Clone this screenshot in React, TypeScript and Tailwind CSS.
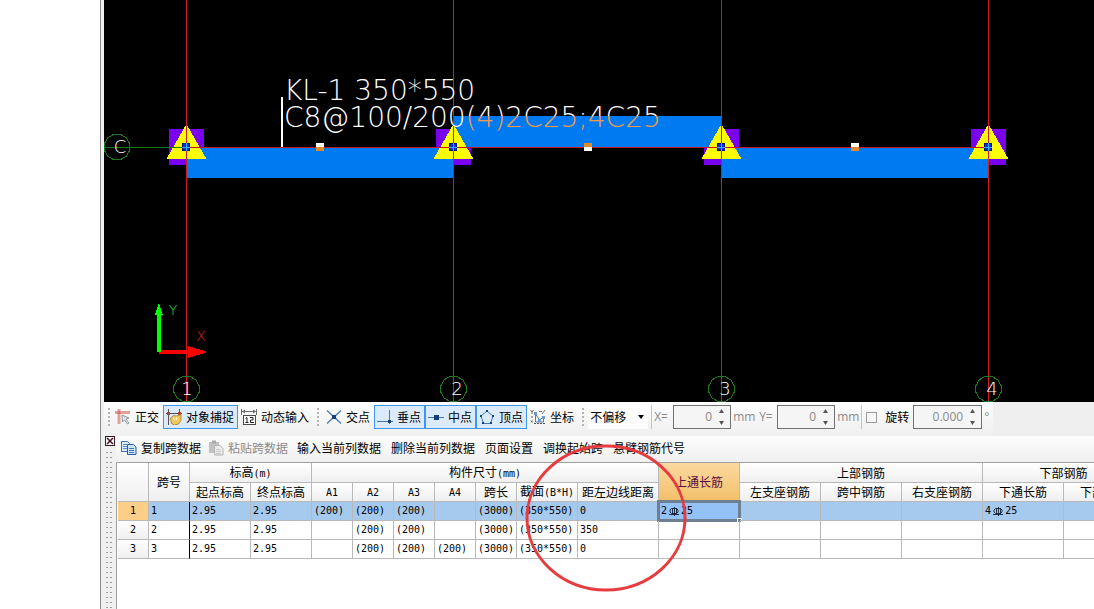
import React, { useState } from 'react';

type IconProps = { className?: string };

const CAD_FONT = "font-['DejaVu_Sans_Light','DejaVu_Sans',sans-serif] font-extralight";

// ---------- toolbar icons ----------

const OrthoIcon: React.FC<IconProps> = () => (
  <svg width="16" height="16" viewBox="0 0 16 16" className="shrink-0">
    <path d="M0 3.500h15M4 0v15" stroke="#e3a19a" strokeWidth="3" fill="none" />
    <path d="M2.500 2h3v3h-3z" fill="#d9776f" />
    <path d="M7 6l7 3-3 1 3 4-1.500 1-3-4-2 2z" fill="#dfe4ea" stroke="#7b8794" strokeWidth="0.8" />
  </svg>
);

const SnapIcon: React.FC<IconProps> = () => (
  <svg width="16" height="16" viewBox="0 0 16 16" className="shrink-0">
    <path d="M0 4.500h16M2.500 0v16M13.500 0v6" stroke="#55504e" strokeWidth="1" fill="none" />
    <path d="M1 3h3v3H1zM12 3h3v3h-3z" fill="#b0443c" />
    <path d="M4.500 9l3-2.500 3 0.500 4.500-1.500v6l-2.500 3.500-4 1-3-1.500z" fill="#f0c860" stroke="#a57b22" strokeWidth="0.8" />
    <path d="M7 9l2 2M10 8l1 3" stroke="#fff0b8" strokeWidth="1.200" />
  </svg>
);

const DynamicInputIcon: React.FC<IconProps> = () => (
  <svg width="16" height="16" viewBox="0 0 16 16" className="shrink-0">
    <path d="M0.500 0v6M15.500 0v6M1 2.500h14" stroke="#6d6d6d" fill="none" />
    <path d="M1 2.500l3-2v4zM15 2.500l-3-2v4z" fill="#6d6d6d" />
    <rect x="2.500" y="6.500" width="12" height="9" fill="#fff" stroke="#4a4a4a" />
    <path d="M4.500 9.500l1.500-1v5.500M4.500 13.500h3M9 8.500h3v2.500H9.500v2.500H13" stroke="#222" fill="none" />
  </svg>
);

const CrossIcon: React.FC<IconProps> = () => (
  <svg width="16" height="16" viewBox="0 0 16 16" className="shrink-0">
    <path d="M1 1.500l14 13M15 1.500l-14 13" stroke="#3f78b5" strokeWidth="1.200" fill="none" />
    <rect x="6" y="6" width="4" height="4" fill="#16407c" />
  </svg>
);

const PerpIcon: React.FC<IconProps> = () => (
  <svg width="16" height="16" viewBox="0 0 16 16" className="shrink-0">
    <path d="M0 12.500h16M12.500 1v14" stroke="#3f78b5" fill="none" />
    <rect x="11" y="11" width="3" height="3" fill="#16407c" />
  </svg>
);

const MidIcon: React.FC<IconProps> = () => (
  <svg width="16" height="16" viewBox="0 0 16 16" className="shrink-0">
    <path d="M0 8.500h16" stroke="#3f78b5" fill="none" />
    <rect x="6" y="6" width="5" height="5" fill="#16407c" />
  </svg>
);

const VertexIcon: React.FC<IconProps> = () => (
  <svg width="16" height="16" viewBox="0 0 16 16" className="shrink-0">
    <path d="M8 2l6 5-2.500 7.500h-7L2 7z" stroke="#3f78b5" fill="none" />
    <path d="M7 1h2v2H7zM13 6h2v2h-2zM11 13h2v2h-2zM3 13h2v2H3zM1 6h2v2H1z" fill="#16407c" />
  </svg>
);

const CoordIcon: React.FC<IconProps> = () => (
  <svg width="16" height="16" viewBox="0 0 16 16" className="shrink-0">
    <path d="M0.500 1l1.500 2L3.500 1M2 3v2" stroke="#444" fill="none" strokeWidth="0.8" />
    <path d="M1 11.500l1.500 2M2.500 11.500l-1.500 2" stroke="#444" fill="none" strokeWidth="0.8" />
    <path d="M2 7v3M4 14.500h12" stroke="#555" fill="none" strokeDasharray="2 1" />
    <path d="M5.500 4v9h8V8l-4 3-4-6" stroke="#4b7fb5" fill="none" />
    <path d="M4 3h3v3H4zM12 7h3v3h-3zM8 10h3v3H8z" fill="#6d9bcb" />
    <path d="M9 2.500h3M12 5l3-4" stroke="#777" />
  </svg>
);

const CopyIcon: React.FC<IconProps> = () => (
  <svg width="16" height="16" viewBox="0 0 16 16" className="shrink-0">
    <path d="M0.500 1.500h6l2 2v8h-8z" fill="#dcecff" stroke="#3d6fb6" />
    <path d="M2 4.500h4M2 6.500h4M2 8.500h4" stroke="#5b8cd0" />
    <path d="M6.500 4.500h6l2.500 2.500v7.500H6.500z" fill="#cfe3fb" stroke="#2b5aa3" />
    <path d="M8 8.500h5M8 10.500h5M8 12.500h5" stroke="#3f76c2" />
  </svg>
);

const PasteIcon: React.FC<IconProps> = () => (
  <svg width="16" height="16" viewBox="0 0 16 16" className="shrink-0">
    <path d="M1 2h10v11H1z" fill="#c2c2c2" />
    <path d="M4 0.500h4v3H4z" fill="#a9a9a9" />
    <path d="M6.500 5.500h5.500l3 3v6.500H6.500z" fill="#ececec" stroke="#b4b4b4" />
    <path d="M8 9.500h4M8 11.500h5M8 13.500h5" stroke="#c8c8c8" />
  </svg>
);

const RebarIcon: React.FC<IconProps> = () => (
  <svg width="12" height="9" viewBox="0 0 12 9" className="shrink-0" aria-hidden="true">
    <path d="M3.500 1.500h5l1.500 1.500v2l-1.500 1.500h-5L2 5V3zM4.500 1v6M6.500 0v9M8.500 1v6M1 7.500h10" stroke="#14203a" strokeWidth="0.9" fill="none" />
  </svg>
);

// ---------- toolbar parts ----------

const Grip = () => (
  <span className="mx-[3px] h-5 w-1 bg-[radial-gradient(circle,#b4b4b4_1px,transparent_1px)] bg-[size:4px_4px]" />
);

interface ToolButtonProps {
  label: string;
  icon?: React.ReactNode;
  active?: boolean;
  disabled?: boolean;
  onClick?: () => void;
}

const ToolButton: React.FC<ToolButtonProps> = ({ label, icon, active, disabled, onClick }) => (
  <button
    type="button"
    disabled={disabled}
    aria-pressed={active}
    onClick={onClick}
    className={`flex h-6 shrink-0 items-center gap-1 whitespace-nowrap border ${icon ? 'pl-0.5 pr-[3px]' : 'px-1'} ${
      active ? 'border-[#3c97f0] bg-[#dcebfb]' : 'border-transparent'
    } ${disabled ? 'text-[#8c8c8c]' : 'text-black'}`}
  >
    {icon}
    {label}
  </button>
);

interface SpinBoxProps {
  id: string;
  value: string;
  wide?: boolean;
}

const SpinBox: React.FC<SpinBoxProps> = ({ id, value, wide }) => {
  const [text, setText] = useState(value);
  const step = (delta: number) => {
    const digits = value.includes('.') ? 3 : 0;
    setText((Number(text) + delta).toFixed(digits));
  };
  return (
    <span className={`flex h-6 shrink-0 border border-[#707070] bg-[#f5f5f5] ${wide ? 'w-[69px]' : 'w-[58px]'}`}>
      <input
        id={id}
        value={text}
        onChange={(e) => setText(e.target.value)}
        className="w-0 flex-1 bg-transparent text-right text-[#8a8a8a] outline-none"
      />
      <span className="flex w-[18px] flex-col items-center justify-between py-[3px]">
        <button type="button" aria-label="+" onClick={() => step(1)}>
          <svg width="5" height="4" viewBox="0 0 5 4" className="block"><path d="M0 4L2.500 0 5 4z" fill="#555" /></svg>
        </button>
        <button type="button" aria-label="-" onClick={() => step(-1)}>
          <svg width="5" height="4" viewBox="0 0 5 4" className="block"><path d="M0 0L2.500 4 5 0z" fill="#555" /></svg>
        </button>
      </span>
    </span>
  );
};

// ---------- drawing area ----------

const axes = [
  { x: 82, label: '1', labelX: 83 },
  { x: 349, label: '2', labelX: 353 },
  { x: 617, label: '3', labelX: 621 },
  { x: 884, label: '4', labelX: 888 },
];

const spans = [
  { x: 83, y: 148, width: 267, height: 30 },
  { x: 350, y: 116, width: 267, height: 31 },
  { x: 618, y: 148, width: 266, height: 30 },
];

const grips = [
  { x: 212, top: '#ffffff', bottom: '#e08a2c' },
  { x: 480, top: '#e08a2c', bottom: '#ffffff' },
  { x: 747, top: '#ffffff', bottom: '#e08a2c' },
];

const bubble = (cx: number, cy: number) =>
  Array.from({ length: 12 }, (_, i) => {
    const a = (Math.PI / 6) * i + Math.PI / 12;
    return `${(cx + 13 * Math.cos(a)).toFixed(1)},${(cy + 13 * Math.sin(a)).toFixed(1)}`;
  }).join(' ');

const DrawingArea = () => (
  <svg className="block h-[402px] w-full bg-black" shapeRendering="crispEdges">
    <defs>
      <linearGradient id="overBeam" gradientUnits="userSpaceOnUse" x1="0" y1="100" x2="0" y2="132">
        <stop offset="0.5" stopColor="#ffffff" />
        <stop offset="0.5" stopColor="#f09a4a" />
      </linearGradient>
    </defs>

    {axes.map((a) => (
      <rect key={a.label} x={a.x - 17} y="129" width="35" height="36" fill="#7a00f0" />
    ))}
    {spans.map((s) => (
      <rect key={s.x} x={s.x} y={s.y} width={s.width} height={s.height} fill="#007af0" />
    ))}
    {axes.map((a) => (
      <path key={a.label} d={`M${a.x + 0.5} 124l20 35h-40z`} fill="#ffff00" />
    ))}

    {/* axis lines */}
    <rect x="0" y="147" width="82" height="1" fill="#147a14" />
    <rect x="82" y="147" width="802" height="1" fill="#c81418" />
    {axes.map((a) => (
      <rect key={a.label} x={a.x} y="0" width="1" height="402" fill="#d01c1c" />
    ))}
    {axes.map((a) => (
      <g key={a.label}>
        <rect x={a.x - 4} y="143" width="8" height="8" fill="#06106e" />
        <rect x={a.x - 3} y="144" width="6" height="6" fill="#0a2ce0" />
        <rect x={a.x - 4} y="147" width="8" height="1" fill="#38b4ff" />
        <rect x={a.x} y="143" width="1" height="8" fill="#38b4ff" />
      </g>
    ))}
    {grips.map((g) => (
      <g key={g.x}>
        <rect x={g.x} y="143" width="8" height="4" fill={g.top} />
        <rect x={g.x} y="147" width="8" height="4" fill={g.bottom} />
      </g>
    ))}

    {/* beam annotation */}
    <rect x="177" y="97" width="2" height="50" fill="#ffffff" />
    <g className={`${CAD_FONT} text-[28px]`} fill="#ffffff" stroke="none">
      <text x="180" y="100">KL-1 350*550</text>
      <text x="180" y="127">
        C8@100/200<tspan fill="url(#overBeam)">(4)2C25;4C25</tspan>
      </text>
    </g>

    {/* axis bubbles */}
    <g fill="none" stroke="#1d7a1d">
      <polygon points={bubble(13, 147)} />
      {axes.map((a) => (
        <polygon key={a.label} points={bubble(a.x + 0.5, 389)} />
      ))}
    </g>
    <g className={`${CAD_FONT} text-[18px]`} fill="#ffffff" textAnchor="middle">
      <text x="16" y="153">C</text>
      {axes.map((a) => (
        <text key={a.label} x={a.labelX} y="395">{a.label}</text>
      ))}
    </g>

    {/* coordinate system */}
    <path d="M55 350h29v-4l20 6-20 6v-4H55z" fill="#ff0000" />
    <path d="M53 352v-37h-2l4-12 4 12h-2v37z" fill="#00ff00" />
    <g className={`${CAD_FONT} text-[14px]`} textAnchor="middle">
      <text x="69" y="315" fill="#22e022">Y</text>
      <text x="97" y="341" fill="#e02020">X</text>
    </g>
  </svg>
);

// ---------- span table ----------

const columnWidths = [
  'w-[31px]', 'w-[41px]', 'w-[61px]', 'w-[61px]', 'w-[41px]', 'w-[41px]', 'w-[41px]', 'w-[41px]', 'w-[41px]',
  'w-[61px]', 'w-[81px]', 'w-[81px]', 'w-[81px]', 'w-[81px]', 'w-[81px]', 'w-[81px]', 'w-[81px]',
];

const subHeaders = [
  '起点标高', '终点标高', 'A1', 'A2', 'A3', 'A4', '跨长', '截面(B*H)', '距左边线距离',
  '左支座钢筋', '跨中钢筋', '右支座钢筋', '下通长筋', '下部钢筋',
];

const rows = [
  ['1', '2.95', '2.95', '(200)', '(200)', '(200)', '', '(3000)', '(350*550)', '0', '2C25', '', '', '', '4C25', ''],
  ['2', '2.95', '2.95', '', '(200)', '(200)', '', '(3000)', '(350*550)', '350', '', '', '', '', '', ''],
  ['3', '2.95', '2.95', '', '(200)', '(200)', '(200)', '(3000)', '(350*550)', '0', '', '', '', '', '', ''],
];

// Latin runs sit in a smaller monospace next to the 12px Chinese text
const HeaderText = ({ text }: { text: string }) => {
  const i = text.search(/[(A]/);
  if (i < 0) return <>{text}</>;
  return (
    <>
      {text.slice(0, i)}
      <span className="font-['DejaVu_Sans_Mono',monospace] text-[10px]">{text.slice(i)}</span>
    </>
  );
};

const CellText = ({ text }: { text: string }) => {
  if (!/^\dC\d+$/.test(text)) return <>{text}</>;
  const [count, size] = text.split('C');
  return (
    <span className="flex items-center gap-px">
      {count}
      <RebarIcon />
      {size}
    </span>
  );
};

const SpanTable = () => {
  const [selected, setSelected] = useState({ row: 0, col: 10 });
  const th = 'border-b border-r border-[#b9b9b9] bg-linear-to-b from-white to-[#efefef] p-0 font-normal';

  return (
    <table className="w-[1027px] table-fixed border-separate border-spacing-0 text-[12px] leading-4 text-black">
      <colgroup>
        {columnWidths.map((w, i) => (
          <col key={i} className={w} />
        ))}
      </colgroup>
      <thead>
        <tr className="h-5">
          <th rowSpan={2} className={th} />
          <th rowSpan={2} className={th}>跨号</th>
          <th colSpan={2} className={th}><HeaderText text="标高(m)" /></th>
          <th colSpan={7} className={th}><HeaderText text="构件尺寸(mm)" /></th>
          <th
            rowSpan={2}
            className="border-b border-r border-[#b9b9b9] bg-linear-to-b from-[#fbd9a0] to-[#f2bf68] p-0 font-normal text-[#5a0a3c]"
          >
            上通长筋
          </th>
          <th colSpan={3} className={th}>上部钢筋</th>
          <th colSpan={2} className={th}>下部钢筋</th>
        </tr>
        <tr className="h-[19px]">
          {subHeaders.map((h) => (
            <th key={h} className={`${th} whitespace-nowrap`}><HeaderText text={h} /></th>
          ))}
        </tr>
      </thead>
      <tbody className="font-['DejaVu_Sans_Mono',monospace] text-[10px]">
        {rows.map((row, r) => {
          const current = r === selected.row;
          return (
            <tr key={r} className={`h-[19px] ${current ? 'bg-[#a6c9ee]' : 'bg-white'}`}>
              <th
                className={`border-b border-r border-[#b9b9b9] p-0 text-center font-normal ${
                  current ? 'bg-[#fbcf87]' : 'bg-linear-to-b from-white to-[#efefef]'
                }`}
              >
                {r + 1}
              </th>
              {row.map((cell, c) => (
                <td
                  key={c}
                  onClick={() => setSelected({ row: r, col: c })}
                  className={`relative whitespace-nowrap border-b border-r border-b-[#b9b9b9] py-0 pl-0.5 pr-0 ${
                    c === 0 ? 'border-r-black' : 'border-r-[#b9b9b9]'
                  } ${current && c === selected.col ? 'bg-[#94c2f6]' : ''}`}
                >
                  <CellText text={cell} />
                  {current && c === selected.col && (
                    <span className="absolute -inset-0.5 border-3 border-[#6f7f92]">
                      <span className="absolute -bottom-1 -right-1 h-[5px] w-[5px] border border-white bg-[#6f7f92]" />
                    </span>
                  )}
                </td>
              ))}
            </tr>
          );
        })}
      </tbody>
    </table>
  );
};

// ---------- page ----------

const App: React.FC = () => {
  const [snaps, setSnaps] = useState<Record<string, boolean>>({
    对象捕捉: true,
    垂点: true,
    中点: true,
    顶点: true,
  });
  const toggle = (name: string) => setSnaps({ ...snaps, [name]: !snaps[name] });

  const snapButton = (label: string, icon: React.ReactNode) => (
    <ToolButton label={label} icon={icon} active={!!snaps[label]} onClick={() => toggle(label)} />
  );

  return (
    <div className="flex min-h-screen overflow-hidden bg-white font-['Noto_Sans_CJK_SC',sans-serif] text-[12px] leading-4">
      <aside className="w-[100px] shrink-0 bg-white" />
      <div className="w-1 shrink-0 border-l border-[#8c8c8c] bg-[#f0f0f0]" />

      <main className="flex min-w-0 flex-1 flex-col">
        <DrawingArea />

        <div className="flex h-[34px] items-center overflow-hidden bg-[#efefef]">
          <div className="flex h-[34px] shrink-0 items-center bg-linear-to-b from-[#fdfdfd] to-[#efefef] pb-1 pr-1">
            <Grip />
            <div className="flex -ml-0.5">
              {snapButton('正交', <OrthoIcon />)}
              {snapButton('对象捕捉', <SnapIcon />)}
              {snapButton('动态输入', <DynamicInputIcon />)}
            </div>
            <Grip />
            <div className="flex">
              {snapButton('交点', <CrossIcon />)}
              {snapButton('垂点', <PerpIcon />)}
              {snapButton('中点', <MidIcon />)}
              {snapButton('顶点', <VertexIcon />)}
              {snapButton('坐标', <CoordIcon />)}
            </div>
            <Grip />
            <label className="relative flex h-6 items-center bg-white">
              <select aria-label="偏移方式" className="h-6 w-[60px] appearance-none bg-transparent pl-0.5 text-black outline-none">
                <option>不偏移</option>
                <option>正交偏移</option>
                <option>极坐标偏移</option>
              </select>
              <svg width="6" height="4" viewBox="0 0 6 4" className="pointer-events-none absolute right-1"><path d="M0 0h6L3 4z" fill="#000" /></svg>
            </label>
            <div className="ml-[3px] flex items-center gap-0.5 border-l border-[#c4c4c4] pl-0.5 font-['Open_Sans',sans-serif] text-[#8a8a8a]">
              <label htmlFor="offset-x" className="w-[17px]">X=</label>
              <SpinBox id="offset-x" value="0" />
              <span className="w-6">mm</span>
              <label htmlFor="offset-y" className="w-4">Y=</label>
              <SpinBox id="offset-y" value="0" />
              <span className="w-6">mm</span>
            </div>
            <div className="flex items-center gap-1 border-l border-[#c4c4c4] pl-1 font-['Open_Sans',sans-serif] text-[#8a8a8a]">
              <input
                id="rotate"
                type="checkbox"
                className="h-[11px] w-[11px] appearance-none border border-[#9a9a9a] bg-[#f7f7f7] checked:bg-[#3c97f0]"
              />
              <label htmlFor="rotate" className="ml-1 font-['Noto_Sans_CJK_SC',sans-serif] text-black">旋转</label>
              <SpinBox id="rotate-angle" value="0.000" wide />
              <label htmlFor="rotate-angle" className="-ml-0.5">°</label>
            </div>
          </div>
        </div>

        <section className="flex flex-1">
          <div className="flex w-3 shrink-0 flex-col bg-[#f0f0f0]">
            <button type="button" aria-label="关闭" className="ml-px">
              <svg width="10" height="10" viewBox="0 0 10 10" className="block">
                <rect x="0.500" y="0.500" width="9" height="9" fill="#fff" stroke="#3a1a22" />
                <path d="M2 2l6 6M8 2l-6 6" stroke="#4a1020" strokeWidth="1.500" />
              </svg>
            </button>
            <div className="ml-px mt-1 w-2 flex-1 bg-[radial-gradient(circle,#9c9c9c_1px,transparent_1px)] bg-[size:4px_5px]" />
          </div>

          <div className="flex min-w-0 flex-1 flex-col">
            <div className="flex h-[26px] items-center overflow-hidden bg-linear-to-b from-[#fdfdfd] to-[#f0f0f0] pb-0.5 pl-0.5">
              <ToolButton label="复制跨数据" icon={<CopyIcon />} />
              <ToolButton label="粘贴跨数据" icon={<PasteIcon />} disabled />
              <ToolButton label="输入当前列数据" />
              <ToolButton label="删除当前列数据" />
              <ToolButton label="页面设置" />
              <ToolButton label="调换起始跨" />
              <ToolButton label="悬臂钢筋代号" />
            </div>
            <div className="relative flex-1 border-l border-t border-[#a0a0a0] bg-white pl-px">
              <div className="overflow-hidden">
                <SpanTable />
              </div>
              {/* review mark over the offset column */}
              <svg width="164" height="150" viewBox="0 0 164 150" className="pointer-events-none absolute -top-5 left-[407px]">
                <ellipse cx="82" cy="75" rx="79" ry="72" fill="none" stroke="#e63c40" strokeWidth="3" />
              </svg>
            </div>
          </div>
        </section>
      </main>
    </div>
  );
};

export default App;
